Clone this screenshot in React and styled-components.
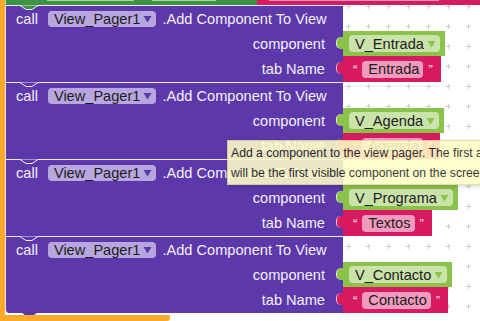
import React from 'react';
import styled, { createGlobalStyle } from 'styled-components';

const GlobalStyle = createGlobalStyle`
  html, body {
    margin: 0;
    padding: 0;
    background: #ffffff;
  }
  body {
    font-family: 'Liberation Sans', Arial, sans-serif;
  }
`;

const PURPLE = '#5c38aa';
const PURPLE_FIELD = '#b8a7de';
const GREEN = '#8bc34a';
const GREEN_FIELD = '#c9e3aa';
const PINK = '#d81b60';
const PINK_FIELD = '#f29bbe';
const ORANGE = '#fbaa2a';
const SET_GREEN = '#3f9143';

const Workspace = styled.div`
  position: relative;
  width: 480px;
  height: 321px;
  overflow: hidden;
  background: #ffffff;
`;

const GridLayer = styled.svg`
  position: absolute;
  inset: 0;
  z-index: 0;
`;

const EventArm = styled.div`
  position: relative;
  z-index: 1;
  display: flex;
  flex-direction: column;
  border-left: 5px solid ${ORANGE};
  padding-bottom: 2px;
`;

const EventBottom = styled.div`
  position: relative;
  z-index: 1;
  width: 170px;
  height: 6px;
  background: ${ORANGE};
  border-radius: 0 0 3px 0;
`;

const TopRemnant = styled.div`
  display: flex;
  height: 5px;
`;

const RemnantPiece = styled.div`
  position: relative;
  width: ${(p) => p.$w}px;
  background: ${(p) => p.$color};
  border-left: ${(p) => (p.$first ? '1px solid rgba(255,255,255,0.6)' : 'none')};
  box-sizing: border-box;
`;

const RemnantField = styled.div`
  position: absolute;
  top: 0;
  left: ${(p) => p.$left}px;
  width: ${(p) => p.$w}px;
  height: 1px;
  background: ${(p) => p.$color};
`;

const CallBlockWrap = styled.div`
  position: relative;
  display: flex;
  flex-direction: column;
`;

const Row = styled.div`
  display: flex;
  height: ${(p) => p.$h}px;
`;

const Body = styled.div`
  box-sizing: border-box;
  width: 338px;
  flex: none;
  display: flex;
  align-items: center;
  justify-content: ${(p) => (p.$end ? 'flex-end' : 'flex-start')};
  padding: ${(p) => (p.$end ? '0 18px 0 0' : '0 0 0 10px')};
  background: ${PURPLE};
  border-left: 1px solid rgba(255, 255, 255, 0.85);
  border-top: ${(p) => (p.$top ? '1px solid rgba(255,255,255,0.9)' : 'none')};
  border-bottom-left-radius: ${(p) => (p.$round ? '4px' : '0')};
  color: #f4f0fb;
  font-size: 14.6px;
  white-space: nowrap;
`;

const Word = styled.span`
  margin-right: ${(p) => p.$mr || 0}px;
`;

const Field = styled.span`
  display: inline-flex;
  align-items: center;
  gap: 3px;
  height: ${(p) => p.$h || 16}px;
  padding: 0 4px 0 6px;
  border-radius: 4px;
  background: ${(p) => p.$bg};
  color: #1c1c1c;
  font-size: 14.6px;
  white-space: nowrap;
  margin-right: ${(p) => p.$mr || 0}px;
`;

const Notch = styled.svg`
  position: absolute;
  left: 15px;
  top: ${(p) => (p.$bottom ? 'auto' : '0')};
  bottom: ${(p) => (p.$bottom ? '-4px' : 'auto')};
`;

const ValueBlock = styled.div`
  position: relative;
  box-sizing: border-box;
  display: flex;
  align-items: center;
  gap: ${(p) => (p.$text ? 5 : 0)}px;
  padding: ${(p) => (p.$text ? '0 8px 0 10px' : '0 5px 0 6px')};
  background: ${(p) => p.$color};
  color: #fbe1ea;
  font-size: 13px;

  &::before {
    content: '';
    position: absolute;
    left: -7px;
    top: 6px;
    width: 7px;
    height: 12px;
    background: ${(p) => p.$color};
    border-radius: 5px 0 0 5px;
    border-left: 1.5px solid rgba(255, 255, 255, 0.75);
    box-sizing: border-box;
  }
`;

const Tooltip = styled.div`
  position: absolute;
  left: 227px;
  top: 140px;
  z-index: 5;
  box-sizing: border-box;
  width: 300px;
  height: 45px;
  padding: 2px 0 0 3px;
  background: #ffffc7;
  border: 1px solid #dcdca8;
  opacity: 0.88;
  box-shadow: 1px 2px 4px rgba(0, 0, 0, 0.15);
  color: #1a1a1a;
  font-size: 12.2px;
  line-height: 20px;
  white-space: nowrap;
`;

const Arrow = ({ color }) => (
  <svg width="9" height="8" viewBox="0 0 9 8">
    <path d="M0.5 1 H8.5 L4.5 7.5 Z" fill={color} />
  </svg>
);

const ComponentValue = ({ name }) => (
  <ValueBlock $color={GREEN}>
    <Field $bg={GREEN_FIELD} $h={17}>
      {name}
      <Arrow color={GREEN} />
    </Field>
  </ValueBlock>
);

const TextValue = ({ text }) => (
  <ValueBlock $color={PINK} $text>
    <span>“</span>
    <Field $bg={PINK_FIELD} $h={17}>{text}</Field>
    <span>”</span>
  </ValueBlock>
);

const CallBlock = ({ view, tab, prevColor, last }) => (
  <CallBlockWrap>
    <Row $h={26}>
      <Body $top>
        <Word $mr={10}>call</Word>
        <Field $bg={PURPLE_FIELD} $mr={6}>
          View_Pager1
          <Arrow color={PURPLE} />
        </Field>
        <Word>.Add Component To View</Word>
      </Body>
    </Row>
    <Row $h={25}>
      <Body $end>component</Body>
      <ComponentValue name={view} />
    </Row>
    <Row $h={26}>
      <Body $end $round={last}>tab Name</Body>
      <TextValue text={tab} />
    </Row>
    <Notch width="19" height="6" viewBox="0 0 19 6">
      <path d="M0 0.5 L6 4.5 H12 L18 0.5" fill={prevColor} stroke="rgba(255,255,255,0.9)" strokeWidth="1" />
    </Notch>
    {last && (
      <Notch $bottom width="19" height="5" viewBox="0 0 19 5">
        <path d="M1 0 L6 4 H13 L18 0 Z" fill={PURPLE} />
      </Notch>
    )}
  </CallBlockWrap>
);

const pages = [
  { view: 'V_Entrada', tab: 'Entrada' },
  { view: 'V_Agenda', tab: 'Agenda' },
  { view: 'V_Programa', tab: 'Textos' },
  { view: 'V_Contacto', tab: 'Contacto' },
];

export default function App() {
  return (
    <>
      <GlobalStyle />
      <Workspace>
        <GridLayer width="480" height="321">
          <defs>
            <pattern id="grid" width="20" height="20" patternUnits="userSpaceOnUse">
              <rect x="6" y="6" width="5" height="1" fill="#cfcfcf" />
              <rect x="8" y="4" width="1" height="5" fill="#cfcfcf" />
            </pattern>
          </defs>
          <rect width="480" height="321" fill="url(#grid)" />
        </GridLayer>
        <EventArm>
          <TopRemnant>
            <RemnantPiece $w={252} $color={SET_GREEN} $first>
              <RemnantField $left={41} $w={87} $color="#a9d7a3" />
              <RemnantField $left={146} $w={64} $color="#a9d7a3" />
            </RemnantPiece>
            <RemnantPiece $w={223} $color={PINK}>
              <RemnantField $left={12} $w={170} $color={PINK_FIELD} />
            </RemnantPiece>
          </TopRemnant>
          {pages.map((p, i) => (
            <CallBlock
              key={p.view}
              view={p.view}
              tab={p.tab}
              prevColor={i === 0 ? SET_GREEN : PURPLE}
              last={i === pages.length - 1}
            />
          ))}
        </EventArm>
        <EventBottom />
        <Tooltip>
          <div>Add a component to the view pager. The first added component</div>
          <div>will be the first visible component on the screen.</div>
        </Tooltip>
      </Workspace>
    </>
  );
}
